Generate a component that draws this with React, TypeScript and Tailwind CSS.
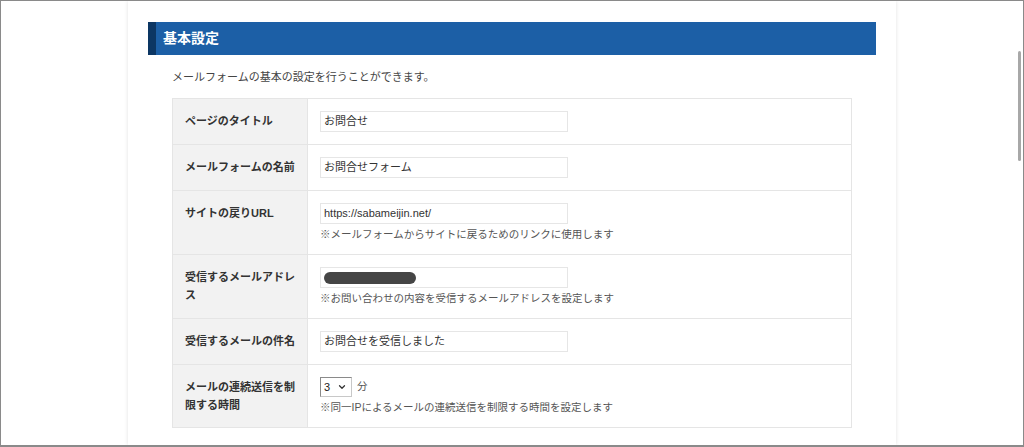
import { ChevronDown } from "lucide-react";

type Row = {
  label: string;
  value?: string;
  redacted?: boolean;
  select?: string;
  note?: string;
};

const rows: Row[] = [
  { label: "ページのタイトル", value: "お問合せ" },
  { label: "メールフォームの名前", value: "お問合せフォーム" },
  {
    label: "サイトの戻りURL",
    value: "https://sabameijin.net/",
    note: "※メールフォームからサイトに戻るためのリンクに使用します",
  },
  {
    label: "受信するメールアドレス",
    redacted: true,
    note: "※お問い合わせの内容を受信するメールアドレスを設定します",
  },
  { label: "受信するメールの件名", value: "お問合せを受信しました" },
  {
    label: "メールの連続送信を制限する時間",
    select: "3",
    note: "※同一IPによるメールの連続送信を制限する時間を設定します",
  },
];

function Field({ row }: { row: Row }) {
  if (row.select) {
    return (
      <div className="flex items-center gap-[5px]">
        <div className="flex h-[20px] w-[32px] items-center justify-between border border-[#8a8a8a] border-r-[#c8c8c8] border-b-[#c8c8c8] bg-white pl-[3px] pr-[4px] text-[11px] text-[#222]">
          <span>{row.select}</span>
          <ChevronDown size={10} strokeWidth={3} className="text-[#333]" />
        </div>
        <span className="text-[10.5px] text-[#555]">分</span>
      </div>
    );
  }
  return (
    <div className="flex h-[21px] w-[248px] items-center border border-[#e6e6e6] bg-white px-[3px] text-[11px] text-[#333]">
      {row.redacted ? (
        <span className="h-[12px] w-[92px] rounded-full bg-[#454545]" />
      ) : (
        <span>{row.value}</span>
      )}
    </div>
  );
}

export default function App() {
  return (
    <div
      className="relative h-[447px] w-[1024px] overflow-hidden border border-b-2 border-[#8a8a8a] bg-white"
      style={{ fontFamily: '"Liberation Sans", "Noto Sans CJK JP", sans-serif' }}
    >
      <div className="mx-auto h-full w-[768px] bg-white px-5 pt-[21px] shadow-[0_0_4px_rgba(0,0,0,0.12)]">
        <div className="flex h-[33px] items-center border-l-[8px] border-[#0c3663] bg-[#1c5fa6] pl-[7px]">
          <h2 className="text-[14px] font-bold text-white">基本設定</h2>
        </div>

        <p className="ml-6 mt-[14px] text-[11px] leading-4 text-[#444]">
          メールフォームの基本の設定を行うことができます。
        </p>

        <div className="mx-6 mt-[13px] border border-b-0 border-[#e5e5e5]">
          {rows.map((row) => (
            <div key={row.label} className="grid grid-cols-[135px_1fr] border-b border-[#e5e5e5]">
              <div className="border-r border-[#e5e5e5] bg-[#f2f2f2] px-3 pb-3 pt-[13px] text-[11px] font-bold leading-[18px] text-[#333]">
                {row.label}
              </div>
              <div className="px-3 py-3">
                <Field row={row} />
                {row.note && (
                  <p className="mt-[3px] text-[10.5px] leading-[15px] text-[#555]">{row.note}</p>
                )}
              </div>
            </div>
          ))}
        </div>
      </div>

      <div className="absolute right-[2px] top-[50px] h-[110px] w-[3px] rounded-full bg-[#a8a8a8]" />
    </div>
  );
}
